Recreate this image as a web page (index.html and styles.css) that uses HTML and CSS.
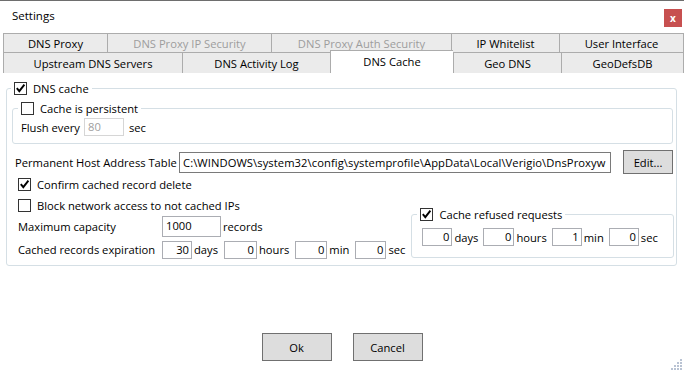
FILE: index.html
```html
<!DOCTYPE html>
<html lang="en">
<head>
    <meta charset="UTF-8">
    <meta name="viewport" content="width=device-width, initial-scale=1.0">
    <title>Settings</title>
    <link rel="stylesheet" href="styles.css">
</head>
<body>
    <div class="window">
        <div class="titlebar">
            <span class="title">Settings</span>
            <button class="close-button">x</button>
        </div>

        <!-- Tabs: two rows, the selected one sits in the lower row -->
        <div class="tabs">
            <div class="tab-row top-row">
                <div class="tab">DNS Proxy</div>
                <div class="tab disabled">DNS Proxy IP Security</div>
                <div class="tab disabled">DNS Proxy Auth Security</div>
                <div class="tab">IP Whitelist</div>
                <div class="tab">User Interface</div>
            </div>
            <div class="tab-row bottom-row">
                <div class="tab">Upstream DNS Servers</div>
                <div class="tab">DNS Activity Log</div>
                <div class="tab selected">DNS Cache</div>
                <div class="tab">Geo DNS</div>
                <div class="tab">GeoDefsDB</div>
            </div>
        </div>

        <div class="panel">
            <fieldset class="group cache-group">
                <legend>
                    <label class="check-label">
                        <span class="check checked"><svg viewBox="0 0 11 11"><path d="M1.8 5.2 L4.3 8.2 L9.4 1.6"/></svg></span>
                        DNS cache
                    </label>
                </legend>

                <fieldset class="group persist-group">
                    <legend>
                        <label class="check-label">
                            <span class="check"></span>
                            Cache is persistent
                        </label>
                    </legend>
                    <div class="flush-row">
                        <span class="flush-label">Flush every</span>
                        <div class="field flush-field disabled">80</div>
                        <span class="unit">sec</span>
                    </div>
                </fieldset>

                <div class="path-row">
                    <span class="path-label">Permanent Host Address Table</span>
                    <div class="field path-field">C:\WINDOWS\system32\config\systemprofile\AppData\Local\Verigio\DnsProxyw</div>
                    <button class="btn edit-btn">Edit...</button>
                </div>

                <div class="lower">
                    <div class="left-col">
                        <div class="check-row">
                            <label class="check-label">
                                <span class="check checked"><svg viewBox="0 0 11 11"><path d="M1.8 5.2 L4.3 8.2 L9.4 1.6"/></svg></span>
                                Confirm cached record delete
                            </label>
                        </div>
                        <div class="check-row">
                            <label class="check-label">
                                <span class="check"></span>
                                Block network access to not cached IPs
                            </label>
                        </div>
                        <div class="field-row">
                            <span class="field-label">Maximum capacity</span>
                            <div class="field capacity-field">1000</div>
                            <span class="unit">records</span>
                        </div>
                        <div class="field-row expiry-row">
                            <span class="field-label">Cached records expiration</span>
                            <div class="field num w30">30</div>
                            <span class="unit">days</span>
                            <div class="field num w33">0</div>
                            <span class="unit">hours</span>
                            <div class="field num w32">0</div>
                            <span class="unit">min</span>
                            <div class="field num w31">0</div>
                            <span class="unit">sec</span>
                        </div>
                    </div>

                    <fieldset class="group refused-group">
                        <legend>
                            <label class="check-label">
                                <span class="check checked"><svg viewBox="0 0 11 11"><path d="M1.8 5.2 L4.3 8.2 L9.4 1.6"/></svg></span>
                                Cache refused requests
                            </label>
                        </legend>
                        <div class="refused-row">
                            <div class="field num w30">0</div>
                            <span class="unit">days</span>
                            <div class="field num w31">0</div>
                            <span class="unit">hours</span>
                            <div class="field num w30">1</div>
                            <span class="unit">min</span>
                            <div class="field num w30">0</div>
                            <span class="unit">sec</span>
                        </div>
                    </fieldset>
                </div>
            </fieldset>
        </div>

        <div class="footer">
            <button class="btn dialog-btn">Ok</button>
            <button class="btn dialog-btn">Cancel</button>
        </div>

        <svg class="size-grip" viewBox="0 0 12 12">
            <rect x="9" y="0" width="2" height="2"/>
            <rect x="6" y="3" width="2" height="2"/>
            <rect x="9" y="3" width="2" height="2"/>
            <rect x="3" y="6" width="2" height="2"/>
            <rect x="6" y="6" width="2" height="2"/>
            <rect x="9" y="6" width="2" height="2"/>
            <rect x="0" y="9" width="2" height="2"/>
            <rect x="3" y="9" width="2" height="2"/>
            <rect x="6" y="9" width="2" height="2"/>
            <rect x="9" y="9" width="2" height="2"/>
        </svg>
    </div>
</body>
</html>
```

FILE: styles.css
```css
* {
    box-sizing: border-box;
    margin: 0;
    padding: 0;
}

body {
    font-family: 'Open Sans', 'Noto Sans', sans-serif;
    font-size: 11.2px;
    color: #000;
    background-color: #fff;
    width: 684px;
    height: 372px;
    overflow: hidden;
}

.window {
    position: relative;
    height: 372px;
    border-top: 1px solid #6e6e6e;
}

/* Title bar */
.titlebar {
    height: 32px;
    display: flex;
    align-items: flex-start;
    justify-content: space-between;
    padding: 7px 2px 0 12px;
}

.title {
    line-height: 16px;
    font-size: 11.5px;
}

.close-button {
    width: 18px;
    height: 18px;
    margin-top: 1px;
    border: none;
    background-color: #c75050;
    color: white;
    font-family: inherit;
    font-size: 10px;
    font-weight: bold;
    line-height: 16px;
}

/* Tabs */
.tabs {
    margin-left: 3px;
}

.tab-row {
    display: grid;
}

.top-row {
    grid-template-columns: 104px 164px 180px 108px 1fr;
    height: 19px;
}

.bottom-row {
    grid-template-columns: 179px 148px 123px 108px 1fr;
    height: 21px;
}

.tab {
    display: flex;
    align-items: center;
    justify-content: center;
    white-space: nowrap;
    overflow: hidden;
    background-color: #ebebeb;
    border-top: 1px solid #acacac;
    border-left: 1px solid #acacac;
}

.tab:last-child {
    border-right: 1px solid #acacac;
}

.tab.disabled {
    color: #9d9d9d;
}

.tab.selected {
    position: relative;
    z-index: 1;
    margin-top: -2px;
    height: 23px;
    background-color: #fff;
    padding-bottom: 1px;
}

/* Panel */
.panel {
    padding: 8px 7px 0 6px;
}

.group {
    border: 1px solid #d5dfe5;
    border-radius: 3px;
    min-width: 0;
}

.group legend {
    padding: 0 3px;
    height: 14px;
}

.check-label {
    display: flex;
    align-items: center;
    height: 14px;
    white-space: nowrap;
}

.check {
    display: inline-flex;
    width: 13px;
    height: 13px;
    border: 1px solid #333;
    background-color: #fff;
    margin-right: 6px;
}

.check svg {
    width: 11px;
    height: 11px;
}

.check path {
    fill: none;
    stroke: #000;
    stroke-width: 1.9;
}

.cache-group {
    padding: 6px 3px 5px 4px;
}

.persist-group {
    margin-left: 1px;
    padding: 2px 6px 6px 5px;
}

.flush-row {
    display: flex;
    align-items: center;
    height: 20px;
    padding-left: 3px;
}

.flush-label {
    width: 63px;
}

.field {
    flex-shrink: 0;
    height: 18px;
    border: 1px solid #abadb3;
    background-color: #fff;
    line-height: 16px;
    padding: 0 3px;
    white-space: nowrap;
    overflow: hidden;
}

.field.disabled {
    border-color: #d6d6d6;
    color: #a0a0a0;
}

.flush-field {
    width: 40px;
}

.unit {
    margin: 0 6px 0 2px;
}

.flush-row .unit {
    margin-left: 5px;
}

.path-row {
    display: flex;
    align-items: center;
    height: 24px;
    margin-top: 6px;
    padding-left: 4px;
}

.path-label {
    width: 164px;
    white-space: nowrap;
}

.path-field {
    width: 432px;
    height: 21px;
    line-height: 19px;
    border-color: #7a7a7a;
    letter-spacing: 0.08px;
}

.btn {
    font-family: inherit;
    font-size: 11.2px;
    color: #000;
    background-color: #dddddd;
    border: 1px solid #707070;
}

.edit-btn {
    margin-left: auto;
    width: 50px;
    height: 24px;
}

.lower {
    display: flex;
}

.left-col {
    flex-shrink: 0;
    padding-left: 7px;
}

.check-row {
    display: flex;
    align-items: center;
    height: 21px;
}

.field-row {
    display: flex;
    align-items: center;
    height: 21px;
}

.field-label {
    width: 144px;
    white-space: nowrap;
}

.capacity-field {
    width: 59px;
    height: 21px;
    line-height: 17px;
}

.expiry-row {
    margin-top: 2px;
}

.num {
    text-align: right;
    padding: 0 2px;
}

.w30 { width: 30px; }
.w31 { width: 31px; }
.w32 { width: 32px; }
.w33 { width: 33px; }

.refused-group {
    flex-shrink: 0;
    width: 263px;
    margin: 33px 1px 0 auto;
    align-self: flex-start;
    padding: 7px 5px 11px 5px;
}

.refused-row {
    display: flex;
    align-items: center;
    height: 18px;
    padding-left: 5px;
}

.refused-row .unit {
    margin: 0 5px 0 2px;
}

/* Dialog buttons */
.footer {
    display: flex;
    justify-content: center;
    gap: 21px;
    margin-top: 67px;
}

.dialog-btn {
    width: 70px;
    height: 28px;
}

.size-grip {
    position: absolute;
    right: 1px;
    bottom: 1px;
    width: 12px;
    height: 12px;
    fill: #b9c3d3;
}
```
